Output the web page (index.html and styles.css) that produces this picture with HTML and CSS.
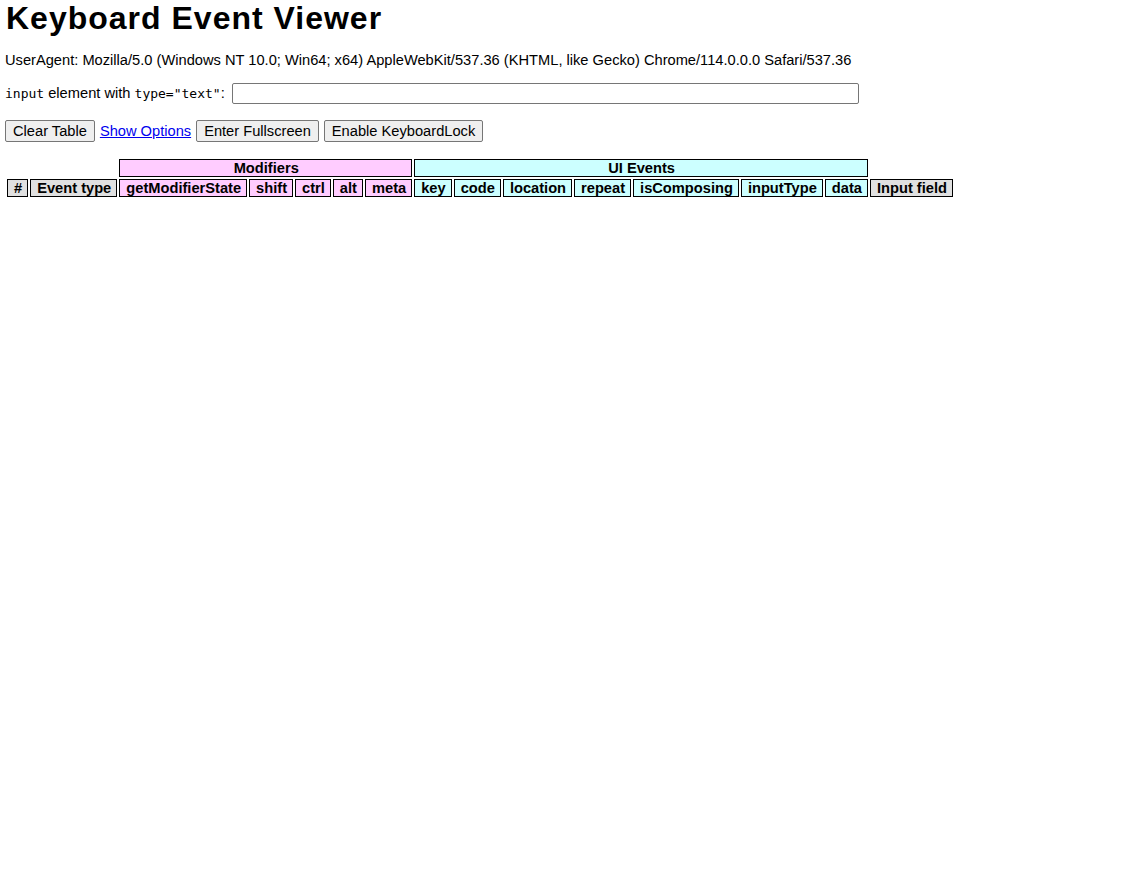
FILE: index.html
```html
<!DOCTYPE html>
<html>
<head>
<meta charset="utf-8">
<title>Keyboard Event Viewer</title>
<link rel="stylesheet" href="styles.css">
</head>
<body>
<h1 class="title">Keyboard Event Viewer</h1>
<p class="ua">UserAgent: Mozilla/5.0 (Windows NT 10.0; Win64; x64) AppleWebKit/537.36 (KHTML, like Gecko) Chrome/114.0.0.0 Safari/537.36</p>
<p class="input-row"><code class="mono">input</code> element with <code class="mono">type="text"</code>: <input class="text-input" type="text"></p>
<p class="buttons"><button class="btn">Clear Table</button> <a class="link" href="#">Show Options</a> <button class="btn">Enter Fullscreen</button> <button class="btn">Enable KeyboardLock</button></p>
<table class="events">
<thead>
<tr>
<th class="empty" colspan="2"></th>
<th class="mod" colspan="5">Modifiers</th>
<th class="ui" colspan="7">UI Events</th>
<th class="empty"></th>
</tr>
<tr>
<th class="gray">#</th>
<th class="gray">Event type</th>
<th class="mod">getModifierState</th>
<th class="mod">shift</th>
<th class="mod">ctrl</th>
<th class="mod">alt</th>
<th class="mod">meta</th>
<th class="ui">key</th>
<th class="ui">code</th>
<th class="ui">location</th>
<th class="ui">repeat</th>
<th class="ui">isComposing</th>
<th class="ui">inputType</th>
<th class="ui">data</th>
<th class="gray">Input field</th>
</tr>
</thead>
</table>
</body>
</html>
```
FILE: styles.css
```css
body {
  margin: 0 5px 5px 5px;
  font-family: "Liberation Sans", Arial, sans-serif;
  font-size: 14.67px;
  color: #000;
  background: #fff;
}
.title {
  font-family: "Liberation Sans", Arial, sans-serif;
  font-size: 32px;
  font-weight: 900;
  letter-spacing: 1px;
  margin: 0 0 0 1px;
  line-height: normal;
}
.ua {
  margin: 15px 0 0 0;
  line-height: 16px;
}
.input-row {
  margin: 14px 0 0 0;
  display: flex;
  align-items: center;
  white-space: pre;
  height: 22px;
}
.mono {
  font-family: "DejaVu Sans Mono", monospace;
  font-size: 13px;
}
.text-input {
  margin-left: 3px;
  width: 621px;
  height: 17px;
  border: 1px solid #767676;
  border-radius: 2px;
  padding: 1px 2px;
}
.buttons {
  margin: 16px 0 0 0;
  display: flex;
  align-items: center;
  gap: 5px;
}
.btn {
  font-family: "Liberation Sans", Arial, sans-serif;
  font-size: 14.67px;
  background: #efefef;
  border: 1px solid #767676;
  border-radius: 2px;
  padding: 1px 7px;
  height: 22px;
  color: #000;
}
.link {
  color: #0000ee;
  text-decoration: underline;
}
.events {
  margin-top: 15px;
  border-collapse: separate;
  border-spacing: 2px;
}
.events th {
  font-size: 14.67px;
  font-weight: bold;
  border: 1px solid #000;
  padding: 0 5px 0 6px;
  height: 16px;
  line-height: 16px;
  white-space: nowrap;
}
.events th.empty {
  border: none;
  background: none;
}
.gray { background: #e0e0e0; }
.mod { background: #ffccff; }
.ui { background: #ccffff; }
```
